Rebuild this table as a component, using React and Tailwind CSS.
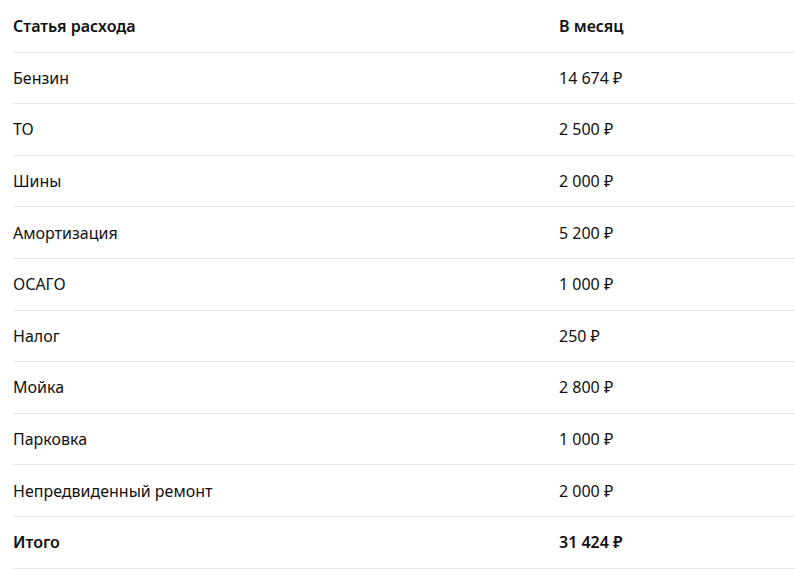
export default function App() {
  const rows = [
    ["Бензин", "14 674 ₽"],
    ["ТО", "2 500 ₽"],
    ["Шины", "2 000 ₽"],
    ["Амортизация", "5 200 ₽"],
    ["ОСАГО", "1 000 ₽"],
    ["Налог", "250 ₽"],
    ["Мойка", "2 800 ₽"],
    ["Парковка", "1 000 ₽"],
    ["Непредвиденный ремонт", "2 000 ₽"],
  ];
  return (
    <div
      className="bg-white min-h-[582px] w-[795px] pl-[13px] pt-px text-[16px] text-[#111]"
      style={{ fontFamily: '"Noto Sans", "Open Sans", sans-serif' }}
    >
      <div className="grid grid-cols-[546px_1fr] border-b border-[#e6e6e6] py-[13.3px] leading-6 font-semibold">
        <div>Статья расхода</div>
        <div>В месяц</div>
      </div>
      {rows.map(([a, b]) => (
        <div
          key={a}
          className="grid grid-cols-[546px_1fr] border-b border-[#e6e6e6] py-[13.3px] leading-6"
        >
          <div>{a}</div>
          <div>{b}</div>
        </div>
      ))}
      <div className="grid grid-cols-[546px_1fr] border-b border-[#e6e6e6] py-[13.3px] leading-6 font-semibold">
        <div>Итого</div>
        <div>31 424 ₽</div>
      </div>
    </div>
  );
}
